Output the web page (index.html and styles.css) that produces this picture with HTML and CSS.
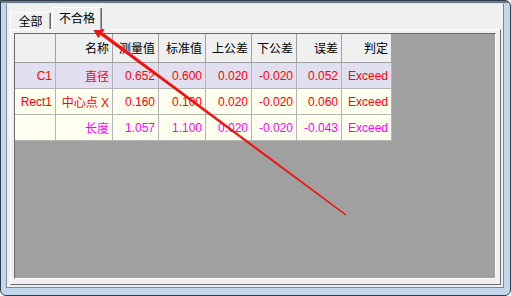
FILE: index.html
```html
<!DOCTYPE html>
<html lang="zh-CN">
<head>
<meta charset="utf-8">
<title>检测结果</title>
<link rel="stylesheet" href="styles.css">
</head>
<body>
<div class="frame">
  <div class="client">
    <div class="tabs">
      <div class="tab">全部</div>
      <div class="tab active">不合格</div>
    </div>
    <div class="panel">
      <div class="grid">
        <table class="results">
          <colgroup>
            <col class="c-id">
            <col class="c-name">
            <col class="c-w46">
            <col class="c-w47">
            <col class="c-w46">
            <col class="c-w45">
            <col class="c-w45">
            <col class="c-w50">
          </colgroup>
          <thead>
            <tr>
              <th></th>
              <th>名称</th>
              <th>测量值</th>
              <th>标准值</th>
              <th>上公差</th>
              <th>下公差</th>
              <th>误差</th>
              <th>判定</th>
            </tr>
          </thead>
          <tbody>
            <tr class="row-sel">
              <td>C1</td>
              <td>直径</td>
              <td>0.652</td>
              <td>0.600</td>
              <td>0.020</td>
              <td>-0.020</td>
              <td>0.052</td>
              <td>Exceed</td>
            </tr>
            <tr>
              <td>Rect1</td>
              <td>中心点 X</td>
              <td>0.160</td>
              <td>0.100</td>
              <td>0.020</td>
              <td>-0.020</td>
              <td>0.060</td>
              <td>Exceed</td>
            </tr>
            <tr class="row-sub">
              <td></td>
              <td>长度</td>
              <td>1.057</td>
              <td>1.100</td>
              <td>0.020</td>
              <td>-0.020</td>
              <td>-0.043</td>
              <td>Exceed</td>
            </tr>
          </tbody>
        </table>
      </div>
    </div>
  </div>
  <!-- annotation arrow drawn over the window -->
  <svg class="arrow" width="511" height="296" viewBox="0 0 511 296">
    <polygon points="102.4,32.3 346.5,214.4 345.6,215.6 100.4,35.1" />
    <polygon points="91,26 104.6,29.5 98.2,37.9" />
  </svg>
</div>
</body>
</html>
```

FILE: styles.css
```css
* {
  box-sizing: border-box;
}

body {
  margin: 0;
  font-family: "Liberation Sans", "Noto Sans CJK SC", sans-serif;
  font-size: 12px;
  color: #000;
  background: #fff;
}

/* window chrome */
.frame {
  position: relative;
  width: 511px;
  height: 296px;
  border: 1px solid #2f3c49;
  border-radius: 0 6px 6px 6px;
  padding: 2px 6px 7px 5px;
  background: linear-gradient(#6a7b8c 0 2px, #c2d7ec 2px);
}

.client {
  height: 100%;
  display: flex;
  flex-direction: column;
  background: #f0f0f0;
  border: 1px solid #7a8897;
  border-top-color: #dbe5ef;
  padding: 3px 2px 2px 3px;
}

/* tab strip */
.tabs {
  display: flex;
  align-items: flex-end;
  height: 22px;
  flex: none;
}

.tab {
  width: 41px;
  height: 17px;
  border: 1px solid #fff;
  border-right-color: #696969;
  border-bottom: none;
  border-radius: 2px 2px 0 0;
  box-shadow: inset -1px 0 #a0a0a0;
  background: #f0f0f0;
  text-align: center;
  font-family: "Noto Sans CJK SC", sans-serif;
  line-height: 16px;
}

.tab.active {
  position: relative;
  z-index: 1;
  width: 50px;
  height: 23px;
  margin-left: 1px;
  margin-bottom: -1px;
  line-height: 20px;
}

/* tab page */
.panel {
  flex: 1;
  display: flex;
  border: 1px solid;
  border-color: #fff #696969 #696969 #fff;
  padding: 3px 4px 5px 3px;
}

.grid {
  flex: 1;
  background: #a0a0a0;
  border: 1px solid;
  border-color: #696969 #fff #fff #696969;
}

/* data grid */
.results {
  table-layout: fixed;
  width: 377px;
  border-collapse: separate;
  border-spacing: 0;
}

.c-id { width: 41px; }
.c-name { width: 57px; }
.c-w45 { width: 45px; }
.c-w46 { width: 46px; }
.c-w47 { width: 47px; }
.c-w50 { width: 50px; }

.results th {
  height: 29px;
  padding: 0 3px 1px 0;
  background: #f0f0f0;
  border-right: 1px solid #a0a0a0;
  border-bottom: 1px solid #a0a0a0;
  text-align: right;
  font-weight: normal;
  font-family: "Noto Sans CJK SC", sans-serif;
  white-space: nowrap;
}

.results td {
  height: 26px;
  padding: 0 3px 0 0;
  background: #fffff0;
  border-right: 1px solid #b4b4b4;
  border-bottom: 1px solid #b4b4b4;
  text-align: right;
  color: #ff0000;
  white-space: nowrap;
}

.results .row-sel td {
  background: #e0e0f0;
}

.results .row-sub td {
  color: #ff00ff;
}

.arrow {
  position: absolute;
  left: -1px;
  top: -1px;
  pointer-events: none;
  fill: #f2120e;
}
```
